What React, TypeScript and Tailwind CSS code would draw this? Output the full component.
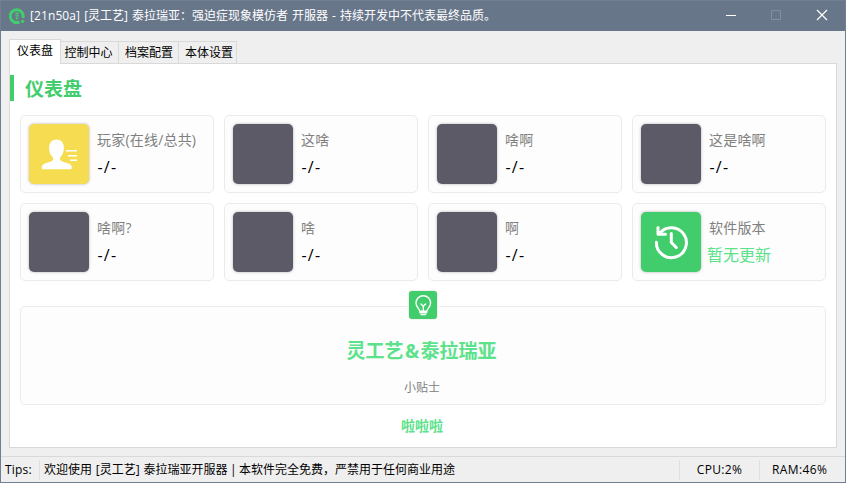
import type { ReactNode } from 'react';

function PlayerIcon() {
  return (
    <svg width="60" height="60" viewBox="0 0 60 60" fill="#fff">
      <path d="M27.500 15.500c4.600 0 7.400 3.400 7.400 8.300 0 4.300-1.500 8-3.700 9.700-.8 1.800.2 3.300 2 4l6.400 2.100c2.200.8 3.200 2.200 3.200 4.200 0 .9-.6 1.500-1.500 1.500H14.200c-1 0-1.500-.6-1.500-1.500 0-2 1-3.400 3.200-4.200l6-2.100c1.800-.7 2.900-2.200 2-4-2.300-1.700-3.800-5.400-3.800-9.700 0-4.900 3-8.300 7.400-8.300Z" />
      <path d="M37 26h11v1.600H37zM39 31h9v1.600h-9zM41 35.500h7v1.600h-7z" />
    </svg>
  );
}

function HistoryIcon() {
  return (
    <svg width="60" height="60" viewBox="0 0 60 60" fill="none" stroke="#fff" strokeWidth="3" strokeLinecap="round" strokeLinejoin="round">
      <path d="M15.400 30.200a15 15 0 1 0 3.100-8.700M17 15.500v6.700h7.500" />
      <path d="M30.300 21.500v9l5 5" />
    </svg>
  );
}

function BulbIcon() {
  return (
    <svg width="28" height="28" viewBox="0 0 28 28" fill="none" stroke="#fff" strokeWidth="1.400" strokeLinecap="round" strokeLinejoin="round">
      <path d="M10.700 20.200c0-2.500-3.700-3.600-3.700-8.200a7.300 7.300 0 0 1 14.600 0c0 4.600-3.700 5.700-3.700 8.200ZM11 20.200v1.600h6.600v-1.600M12 23.600h4.600M12 13l2.300 2.200 2.300-2.200M14.300 15.200v5" />
    </svg>
  );
}

function AppLogo() {
  return (
    <svg width="16" height="16" viewBox="0 0 16 16" fill="none">
      <path d="M13.800 10A6.400 6.400 0 1 0 10.500 13.900" stroke="#42cd6d" strokeWidth="3" />
      <path d="M8 4v8M6 5.500h4M6 7.800h4M6.500 10.300h3" stroke="#42cd6d" strokeWidth="1" />
      <circle cx="13.600" cy="13.300" r="1.600" fill="#42cd6d" />
    </svg>
  );
}

type CardProps = { label: string; value?: string; tile?: string; icon?: ReactNode; accent?: boolean };

function Card({ label, value = '-/-', tile = 'bg-[#5c5a66]', icon, accent }: CardProps) {
  return (
    <div className="flex h-[78px] rounded-[5px] border border-[#ebebeb] bg-[#fdfdfd] pt-2 pl-2">
      <div className={`size-[60px] shrink-0 overflow-hidden rounded-[5px] shadow-[0_0_3px_rgba(0,0,0,0.3)] ${tile}`}>{icon}</div>
      <div className="pl-2 whitespace-nowrap">
        <div className="mt-[6px] h-5 text-[14px] leading-5 tracking-[0.2px] text-[#808080]">{label}</div>
        {accent ? (
          <div className="mt-[5px] -ml-[2px] text-[16px] leading-6 text-[#5be28b]">{value}</div>
        ) : (
          <div className="mt-[5px] ml-[0.5px] text-[16px] leading-6 tracking-[1.200px] text-black">{value}</div>
        )}
      </div>
    </div>
  );
}

const cards: CardProps[] = [
  { label: '玩家(在线/总共)', tile: 'bg-[#f5dc50]', icon: <PlayerIcon /> },
  { label: '这啥' },
  { label: '啥啊' },
  { label: '这是啥啊' },
  { label: '啥啊?' },
  { label: '啥' },
  { label: '啊' },
  { label: '软件版本', value: '暂无更新', tile: 'bg-[#42cd6d]', icon: <HistoryIcon />, accent: true },
];

export default function App() {
  return (
    <div
      lang="zh-CN"
      className="flex h-[483px] w-[846px] flex-col overflow-hidden border border-[#717f95] bg-[#efefef] font-['Open_Sans','Noto_Sans_CJK_SC',sans-serif] text-[12px] text-black"
    >
      <header className="flex h-[30px] shrink-0 items-center bg-[#68768a] pl-2 text-white">
        <AppLogo />
        <h1 className="ml-[5px] flex-1 whitespace-nowrap leading-[30px] [word-spacing:0.9px]">
          <span className="tracking-[0.1px]">[21n50a]</span> [灵工艺] 泰拉瑞亚：强迫症现象模仿者 开服器 - 持续开发中不代表最终品质。
        </h1>
        <svg className="-mr-px" width="120" height="30" viewBox="0 0 120 30" fill="none">
          <path d="M0 14.500h10" stroke="#fff" />
          <path d="M45.500 9.500h9v9h-9z" stroke="#8190a0" />
          <path d="M91 9l10 10M101 9l-10 10" stroke="#fff" strokeWidth="1.200" />
        </svg>
      </header>

      <nav className="relative z-10 -mb-px flex h-[33px] shrink-0 items-end pl-2 whitespace-nowrap">
        <div className="h-[25px] w-[52px] border border-b-0 border-[#d9d9d9] bg-white text-center leading-[22px]">仪表盘</div>
        <div className="h-[23px] w-[58px] border border-l-0 border-[#d9d9d9] bg-[#efefef] pl-[3.500px] leading-[22px]">控制中心</div>
        <div className="h-[23px] w-[60px] border border-l-0 border-[#d9d9d9] bg-[#efefef] pl-[6px] leading-[22px]">档案配置</div>
        <div className="h-[23px] w-[58px] border border-l-0 border-[#d9d9d9] bg-[#efefef] pl-[6px] leading-[22px]">本体设置</div>
      </nav>

      <main className="mx-2 h-[385px] shrink-0 border border-[#d9d9d9] bg-white">
        <div className="mt-[11px] flex h-[26px] items-center">
          <div className="h-[26px] w-1 bg-[#42cd6d]" />
          <h2 className="mt-[2px] ml-[11px] text-[19px] leading-[26px] font-bold text-[#42cd6d]">仪表盘</h2>
        </div>
        <div className="mx-[10px] mt-[14px] grid grid-cols-4 gap-[10px]">
          {cards.map((card) => (
            <Card key={card.label} {...card} />
          ))}
        </div>
        <section className="relative mx-[10px] mt-[25px] h-[99px] rounded-[5px] border border-[#ebebeb] bg-[#fdfdfd] text-center">
          <div className="absolute -top-[18px] left-[386px] rounded-[6px] bg-white p-[2px]">
            <div className="size-7 rounded-[3px] bg-[#42cd6d] shadow-[0_0_2px_rgba(0,0,0,0.2)]">
              <BulbIcon />
            </div>
          </div>
          <h3 className="mt-[30px] -ml-[3px] text-[19px] leading-[28px] font-bold text-[#5be28b]">
            灵工艺<span className="px-[1.300px]">&amp;</span>泰拉瑞亚
          </h3>
          <p className="mt-[14px] -ml-[2px] text-[12px] leading-[18px] text-[#808080]">小贴士</p>
        </section>
        <p className="mt-[11px] -ml-[2px] text-center text-[14px] leading-5 font-semibold text-[#5be28b]">啦啦啦</p>
      </main>

      <footer className="mt-2 flex h-[26px] shrink-0 items-center border-t border-[#d9d9d9] whitespace-nowrap">
        <div className="w-[38px] pl-1 tracking-[0.2px]">Tips:</div>
        <div className="flex h-5 flex-1 items-center border-l border-[#dfdfdf] pl-1">
          <p>
            <span className="[word-spacing:0.7px]">欢迎使用 [灵工艺] 泰拉瑞亚开服器</span>
            <span className="[word-spacing:-0.7px]"> | 本软件完全免费，严禁用于任何商业用途</span>
          </p>
        </div>
        <div className="flex h-5 w-[80px] items-center justify-center border-l border-[#dfdfdf] tracking-[0.3px]">CPU:2%</div>
        <div className="flex h-5 w-[86px] items-center border-l border-[#dfdfdf] pl-3 tracking-[0.4px]">RAM:46%</div>
      </footer>
    </div>
  );
}
